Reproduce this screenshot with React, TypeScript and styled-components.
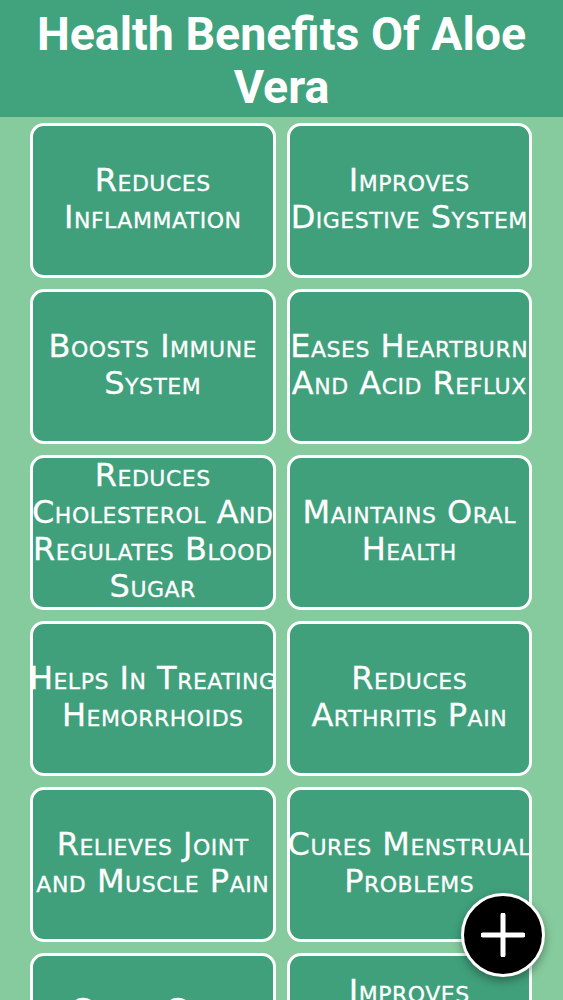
import React from 'react'
import styled, { createGlobalStyle } from 'styled-components'

// each benefit is stored with the line breaks the tiles show
const benefits: string[][] = [
  ['Reduces', 'Inflammation'],
  ['Improves', 'Digestive System'],
  ['Boosts Immune', 'System'],
  ['Eases Heartburn', 'And Acid Reflux'],
  ['Reduces', 'Cholesterol And', 'Regulates Blood', 'Sugar'],
  ['Maintains Oral', 'Health'],
  ['Helps In Treating', 'Hemorrhoids'],
  ['Reduces', 'Arthritis Pain'],
  ['Relieves Joint', 'and Muscle Pain'],
  ['Cures Menstrual', 'Problems'],
  ['Cures Cold', 'Sores'],
  ['Improves', 'Skin And Hair', 'Health'],
]

const GlobalStyle = createGlobalStyle`
  html, body {
    margin: 0;
    padding: 0;
    background: #86cb9d;
  }
  * {
    box-sizing: border-box;
  }
`

const Page = styled.div`
  min-height: 100vh;
  background: #86cb9d;
`

const Header = styled.header`
  background: #40a37e;
  padding: 8px 4px 3px;
  text-align: center;
`

const Title = styled.h1`
  margin: 0;
  font-family: Roboto, 'Liberation Sans', sans-serif;
  font-weight: 700;
  font-size: 46.5px;
  line-height: 53px;
  color: #ffffff;
`

const Grid = styled.div`
  display: grid;
  grid-template-columns: 1fr 1fr;
  grid-auto-rows: 155px;
  gap: 11px;
  padding: 6px 31px 20px 30px;
`

const Card = styled.div`
  display: flex;
  flex-direction: column;
  align-items: center;
  justify-content: center;
  overflow: hidden;
  padding-bottom: 4px;
  background: #40a07b;
  border: 3px solid #ffffff;
  border-radius: 14px;
`

const Line = styled.span`
  flex: none;
  white-space: nowrap;
  font-family: 'DejaVu Sans', 'Liberation Sans', sans-serif;
  font-variant: small-caps;
  font-size: 32px;
  line-height: 37px;
  letter-spacing: 0.5px;
  color: #ffffff;
  -webkit-text-stroke: 0.3px #ffffff;
`

const Fab = styled.button`
  position: fixed;
  right: 18px;
  bottom: 23px;
  width: 84px;
  height: 84px;
  display: flex;
  align-items: center;
  justify-content: center;
  padding: 0;
  background: #000000;
  border: 3px solid #ffffff;
  border-radius: 50%;
  box-shadow: 0 4px 10px rgba(0, 0, 0, 0.35);
  cursor: pointer;
`

const PlusIcon = () => (
  <svg width="44" height="44" viewBox="0 0 44 44">
    <path d="M22 2v40M2 22h40" stroke="#ffffff" strokeWidth="5" strokeLinecap="round" />
  </svg>
)

export default function App() {
  return (
    <Page>
      <GlobalStyle />
      <Header>
        <Title>Health Benefits Of Aloe Vera</Title>
      </Header>
      <Grid>
        {benefits.map((lines) => (
          <Card key={lines.join(' ')}>
            {lines.map((l) => (
              <Line key={l}>{l}</Line>
            ))}
          </Card>
        ))}
      </Grid>
      <Fab aria-label="Add">
        <PlusIcon />
      </Fab>
    </Page>
  )
}
